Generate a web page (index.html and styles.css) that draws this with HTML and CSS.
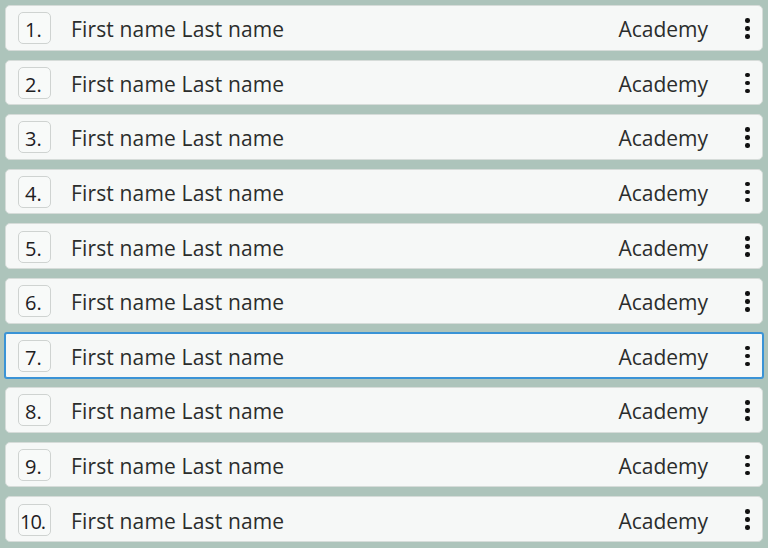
FILE: index.html
```html
<!DOCTYPE html>
<html lang="en">
<head>
<meta charset="utf-8">
<link rel="stylesheet" href="styles.css">
</head>
<body>
<ul class="list">
  <li class="row"><span class="num">1.</span><span class="name">First name Last name</span><span class="academy">Academy</span><span class="menu"><i></i><i></i><i></i></span></li>
  <li class="row"><span class="num">2.</span><span class="name">First name Last name</span><span class="academy">Academy</span><span class="menu"><i></i><i></i><i></i></span></li>
  <li class="row"><span class="num">3.</span><span class="name">First name Last name</span><span class="academy">Academy</span><span class="menu"><i></i><i></i><i></i></span></li>
  <li class="row"><span class="num">4.</span><span class="name">First name Last name</span><span class="academy">Academy</span><span class="menu"><i></i><i></i><i></i></span></li>
  <li class="row"><span class="num">5.</span><span class="name">First name Last name</span><span class="academy">Academy</span><span class="menu"><i></i><i></i><i></i></span></li>
  <li class="row"><span class="num">6.</span><span class="name">First name Last name</span><span class="academy">Academy</span><span class="menu"><i></i><i></i><i></i></span></li>
  <li class="row selected"><span class="num">7.</span><span class="name">First name Last name</span><span class="academy">Academy</span><span class="menu"><i></i><i></i><i></i></span></li>
  <li class="row"><span class="num">8.</span><span class="name">First name Last name</span><span class="academy">Academy</span><span class="menu"><i></i><i></i><i></i></span></li>
  <li class="row"><span class="num">9.</span><span class="name">First name Last name</span><span class="academy">Academy</span><span class="menu"><i></i><i></i><i></i></span></li>
  <li class="row"><span class="num num-wide">10.</span><span class="name">First name Last name</span><span class="academy">Academy</span><span class="menu"><i></i><i></i><i></i></span></li>
</ul>
</body>
</html>
```

FILE: styles.css
```css
html, body {
  margin: 0;
  padding: 0;
  height: 100%;
  background: #adc4bb;
}
body {
  font-family: "Open Sans", "Noto Sans", sans-serif;
  color: #2b2d2c;
}
.list {
  list-style: none;
  margin: 0;
  padding: 5px 5px;
  display: flex;
  flex-direction: column;
  gap: 9px;
}
.row {
  box-sizing: border-box;
  height: 45.6px;
  display: flex;
  align-items: center;
  background: #f6f8f7;
  border: 1px solid #d6dcd9;
  border-radius: 5px;
  padding: 0 13px 0 12px;
}
.row.selected {
  border-color: #3a93d6;
  box-shadow: 0 0 0 1px #3a93d6;
  border-radius: 2px;
}
.num {
  box-sizing: border-box;
  width: 33px;
  height: 32px;
  border: 1px solid #cfd3d1;
  border-radius: 5px;
  background: #f8faf9;
  font-size: 20px;
  line-height: 30px;
  padding: 2px 0 0 6px;
  margin-right: 20px;
  margin-top: 1px;
  flex: none;
  color: #1e201f;
}
.num-wide {
  padding-left: 1px;
  letter-spacing: -1px;
}
.name {
  flex: 1;
  font-size: 21px;
  letter-spacing: 0.15px;
  padding-top: 3px;
}
.academy {
  font-size: 21px;
  padding-top: 3px;
  margin-right: 37px;
}
.menu {
  display: flex;
  flex-direction: column;
  gap: 3.5px;
  width: 4px;
  margin-top: 1px;
}
.menu i {
  display: block;
  width: 4.5px;
  height: 4.5px;
  border-radius: 50%;
  background: #111;
}
```
